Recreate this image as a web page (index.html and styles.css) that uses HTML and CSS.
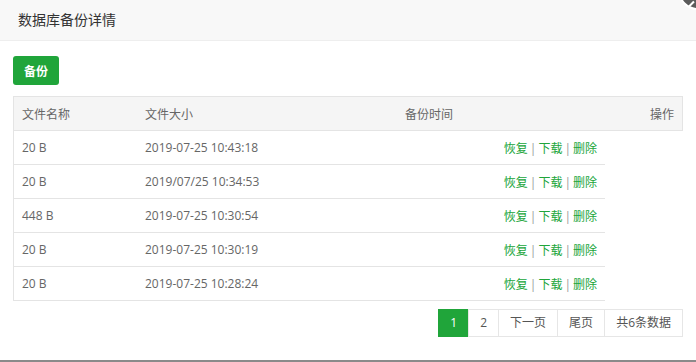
FILE: index.html
```html
<!DOCTYPE html>
<html lang="zh-CN">
<head>
<meta charset="utf-8">
<title>数据库备份详情</title>
<link rel="stylesheet" href="styles.css">
</head>
<body>
<div class="layer">
  <div class="layer-title">数据库备份详情</div>
  <span class="layer-close"><span class="x"></span></span>
  <div class="layer-content">
    <button class="btn" type="button">备份</button>
    <div class="grid">
      <table class="thead">
        <colgroup><col class="c1"><col class="c2"><col class="c3"><col></colgroup>
        <tr><th>文件名称</th><th>文件大小</th><th>备份时间</th><th class="right">操作</th></tr>
      </table>
      <table class="tbody">
        <colgroup><col class="c1"><col class="c2"><col></colgroup>
        <tr><td>20 B</td><td>2019-07-25 10:43:18</td><td class="right"><a>恢复</a><span class="sep">|</span><a>下载</a><span class="sep">|</span><a>删除</a></td></tr>
        <tr><td>20 B</td><td>2019/07/25 10:34:53</td><td class="right"><a>恢复</a><span class="sep">|</span><a>下载</a><span class="sep">|</span><a>删除</a></td></tr>
        <tr><td>448 B</td><td>2019-07-25 10:30:54</td><td class="right"><a>恢复</a><span class="sep">|</span><a>下载</a><span class="sep">|</span><a>删除</a></td></tr>
        <tr><td>20 B</td><td>2019-07-25 10:30:19</td><td class="right"><a>恢复</a><span class="sep">|</span><a>下载</a><span class="sep">|</span><a>删除</a></td></tr>
        <tr><td>20 B</td><td>2019-07-25 10:28:24</td><td class="right"><a>恢复</a><span class="sep">|</span><a>下载</a><span class="sep">|</span><a>删除</a></td></tr>
      </table>
    </div>
    <div class="pager">
      <span class="pg active">1</span><span class="pg">2</span><span class="pg">下一页</span><span class="pg">尾页</span><span class="pg">共6条数据</span>
    </div>
  </div>
</div>
<div class="bottom-bar"></div>
</body>
</html>
```
FILE: styles.css
```css
html, body {
  margin: 0;
  padding: 0;
  background: #fff;
  font-family: "Open Sans", "Noto Sans CJK SC", sans-serif;
  font-size: 12px;
  color: #666;
}
body {
  width: 696px;
  height: 362px;
  overflow: hidden;
  position: relative;
}
.layer {
  height: 360px;
}
.layer-title {
  height: 40px;
  line-height: 40px;
  padding-left: 18px;
  background: #f8f8f8;
  border-bottom: 1px solid #eee;
  font-size: 14px;
  color: #333;
}
.layer-close {
  position: absolute;
  left: 678px;
  top: -30px;
  width: 40px;
  height: 40px;
  border-radius: 50%;
  background: #5b5b5b;
  border: 2px solid #fff;
  box-sizing: border-box;
  z-index: 2;
}
.layer-close .x {
  position: absolute;
  left: 8px;
  top: 31px;
  width: 7px;
  height: 2px;
  background: #fff;
  transform: rotate(-45deg);
}
.layer-content {
  padding: 15px 13px 0 13px;
}
.btn {
  display: block;
  height: 29px;
  width: 46px;
  padding: 0;
  border: 0;
  border-radius: 3px;
  background: #20a53a;
  color: #fff;
  font-family: "Noto Sans CJK SC", sans-serif;
  font-size: 12px;
  font-weight: bold;
}
.grid {
  margin-top: 11px;
}
table {
  border-collapse: separate;
  border-spacing: 0;
  table-layout: fixed;
}
col.c1 { width: 123px; }
col.c2 { width: 260px; }
col.c3 { width: 200px; }
th, td {
  padding: 0 8px;
  text-align: left;
  font-weight: normal;
  white-space: nowrap;
}
.right { text-align: right; }
.thead {
  width: 670px;
  background: #f5f5f5;
  border: 1px solid #e4e4e4;
}
.thead th {
  height: 33px;
  color: #666;
}
.tbody {
  width: 592px;
  border-left: 1px solid #e4e4e4;
}
.tbody td {
  height: 33px;
  border-bottom: 1px solid #e4e4e4;
}
.tbody a {
  color: #20a53a;
}
.sep {
  color: #999;
  margin: 0 2px;
}
.pager {
  display: flex;
  justify-content: flex-end;
  margin-top: 8px;
}
.pg {
  height: 26px;
  line-height: 26px;
  padding: 0 11px;
  border: 1px solid #e6e6e6;
  margin-left: -1px;
  color: #555;
  background: #fff;
}
.pg.active {
  background: #20a53a;
  border-color: #20a53a;
  color: #fff;
}
.bottom-bar {
  height: 2px;
  background: #8a8a8a;
}
```
